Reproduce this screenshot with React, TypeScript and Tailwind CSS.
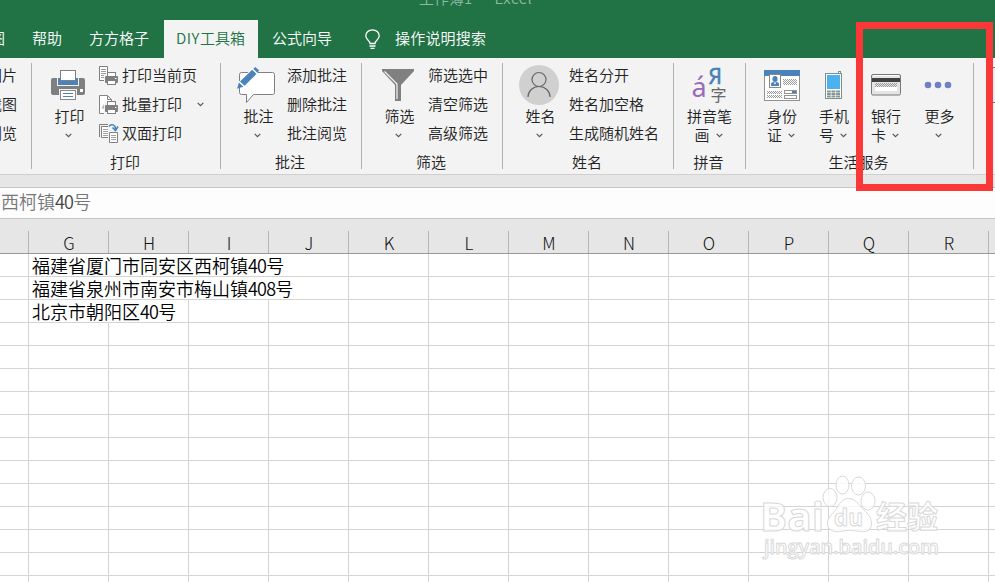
import React from 'react'

type Children = { children: React.ReactNode }

const Caret = () => (
  <svg width="7" height="5" viewBox="0 0 7 5" fill="none" stroke="#555" strokeWidth="1.2" className="shrink-0">
    <path d="M0.7 0.8L3.5 3.6L6.3 0.8" />
  </svg>
)

const PrinterIcon = () => (
  <svg width="34" height="30" viewBox="0 0 34 30">
    <rect x="0" y="8" width="34" height="17" rx="2" fill="#7f7f7f" />
    <rect x="6" y="7" width="22" height="9" fill="#f3f3f3" />
    <rect x="7" y="8" width="20" height="7" fill="#4a82bb" />
    <rect x="9.5" y="0.5" width="15" height="10" fill="#fff" stroke="#7f7f7f" />
    <rect x="29" y="19" width="3" height="3" fill="#fff" />
    <rect x="8" y="19" width="18" height="6" fill="#f3f3f3" />
    <rect x="9.5" y="20.5" width="15" height="9" fill="#fff" stroke="#8a8a8a" />
    <path d="M12 23.5h10M12 26.5h10" stroke="#4a82bb" />
  </svg>
)

const MiniPrinter = () => (
  <g>
    <rect x="5" y="8" width="15" height="12" fill="#f3f3f3" />
    <rect x="6" y="10" width="13" height="7" rx="1" fill="#7f7f7f" />
    <rect x="8.5" y="6.5" width="8" height="4" fill="#fff" stroke="#7f7f7f" />
    <rect x="8.5" y="14.5" width="8" height="4" fill="#fff" stroke="#7f7f7f" />
    <path d="M16 12.5h1.500" stroke="#fff" />
  </g>
)

const PrintPageIcon = () => (
  <svg width="20" height="20" viewBox="0 0 20 20">
    <path d="M0.5 0.5h8v14h-8z" fill="#fff" stroke="#7f7f7f" />
    <path d="M2 3.5h5M2 5.5h5M2 7.5h5M2 9.5h5M2 11.5h5" stroke="#9a9a9a" />
    <MiniPrinter />
  </svg>
)

const PrintBatchIcon = () => (
  <svg width="20" height="20" viewBox="0 0 20 20">
    <path d="M0.5 0.5h8l4 4v14h-12z" fill="#fff" stroke="#858585" />
    <path d="M8.5 0.5v4h4" fill="none" stroke="#858585" />
    <path d="M2.5 13.5L5 9l3 5" fill="#b5b5b5" />
    <MiniPrinter />
  </svg>
)

const DuplexIcon = () => (
  <svg width="20" height="20" viewBox="0 0 20 20">
    <path d="M0.5 13V0.5H9" fill="none" stroke="#7f7f7f" />
    <path d="M2.5 2.5h9v11h-9z" fill="#fff" stroke="#7f7f7f" />
    <path d="M4 5.5h6M4 7.5h6M4 9.5h6M4 11.5h5" stroke="#a0a0a0" />
    <path d="M9 0h11v19H9z" fill="#f3f3f3" />
    <path d="M10.5 8.500h8v10h-8z" fill="#fff" stroke="#7f7f7f" />
    <path d="M12 11.5h5M12 13.5h5M12 15.5h5" stroke="#a0a0a0" />
    <path d="M10 2.500C12 -0.500 16.500 0.500 16.500 5" fill="none" stroke="#3f7fbd" strokeWidth="1.400" />
    <path d="M13.500 3.500L16.500 6.500L19 2.500" fill="none" stroke="#3f7fbd" strokeWidth="1.500" />
  </svg>
)

const CommentIcon = () => (
  <svg width="38" height="37" viewBox="0 0 38 37">
    <path d="M4.500 5.500h31q2 0 2 2v18q0 2-2 2H16.500l-7 8v-8H4.500q-2 0-2-2v-18q0-2 2-2z" fill="#fff" stroke="#7f7f7f" />
    <path d="M4 19L19 4" stroke="#fff" strokeWidth="9" />
    <path d="M3 14.500L15.200 2.800L19.400 7L7.500 18.700z" fill="#4a82bb" />
    <path d="M16.300 1.800L18.300 0L22.200 3.500L20.300 5.700z" fill="#4a82bb" />
    <path d="M2 15.500L6.400 19.700L0 21.800z" fill="#4a82bb" />
  </svg>
)

const FunnelIcon = () => (
  <svg width="32" height="32" viewBox="0 0 32 32">
    <path d="M0 0h32v2L19 16v16h-6V16L0 2z" fill="#808080" />
    <path d="M2.500 2.500L15 15v15" fill="none" stroke="#f3f3f3" strokeWidth="1.200" />
  </svg>
)

const PersonIcon = () => (
  <svg width="40" height="40" viewBox="0 0 40 40">
    <circle cx="20" cy="20" r="20" fill="#d0d0d0" />
    <g fill="none" stroke="#666" strokeWidth="1.200">
      <circle cx="20" cy="14.500" r="7" />
      <path d="M9 32c0-6 5-10.500 11-10.500S31 26 31 32" />
    </g>
  </svg>
)

const PinyinIcon = () => (
  <svg width="34" height="36" viewBox="0 0 34 36" className="overflow-visible font-normal">
    <text x="-1.500" y="30" fontSize="27" fill="#9c6bb8" fontFamily="Noto Sans">á</text>
    <text x="15.500" y="17" fontSize="21" fill="#477fb9" stroke="#477fb9" strokeWidth="0.500" fontFamily="Noto Sans">Я</text>
    <text x="17.500" y="34" fontSize="16" fill="#666" fontFamily="Noto Sans CJK SC">字</text>
  </svg>
)

const IdCardIcon = () => (
  <svg width="36" height="31" viewBox="0 0 36 31">
    <defs>
      <pattern id="dots" width="2" height="2" patternUnits="userSpaceOnUse">
        <path d="M0 0h1v1H0zM1 1h1v1H1z" fill="#999" />
      </pattern>
    </defs>
    <rect x="0.500" y="0.500" width="35" height="30" fill="#fff" stroke="#929292" />
    <rect width="36" height="6" fill="#4a82bb" />
    <rect x="5.500" y="4.500" width="11" height="13" fill="#fff" stroke="#888" />
    <rect x="8.500" y="6" width="5" height="6" rx="2.500" fill="#4a82bb" />
    <path d="M7 16v-2q0-1.500 2-2h4q2 .5 2 2v2z" fill="#4a82bb" />
    <path d="M9.500 12.500l1.500 2l1.500-2z" fill="#fff" />
    <path d="M19 9h14v6H19zM3 21h15v3H3zM3 25h15v3H3z" fill="url(#dots)" />
    <rect x="20.500" y="20.500" width="12" height="3" fill="#fff" stroke="#929292" />
    <rect x="28" y="21" width="4" height="2" fill="#4a82bb" />
    <rect x="20.500" y="25.500" width="12" height="3" fill="#fff" stroke="#929292" />
  </svg>
)

const PhoneIcon = () => (
  <svg width="18" height="28" viewBox="0 0 18 28">
    <rect x="13.500" y="0.500" width="2" height="3" fill="#fff" stroke="#7d9090" />
    <rect x="0.500" y="2.500" width="16" height="25" fill="#fff" stroke="#7d9090" />
    <rect x="2" y="4" width="13" height="14" fill="#4bb1ef" />
    <path d="M2 20.500h13M2 23h13M2 25.500h13" stroke="#86958f" strokeWidth="1.800" />
    <path d="M6.200 19v8M10.700 19v8" stroke="#fff" strokeWidth="0.700" />
  </svg>
)

const BankCardIcon = () => (
  <svg width="30" height="22" viewBox="0 0 30 22">
    <rect x="0.500" y="0.500" width="29" height="20.500" rx="1.500" fill="#e4e4e4" stroke="#777" />
    <path d="M2 1.500h26" stroke="#fff" />
    <rect x="1" y="4" width="28" height="4" fill="#404040" />
    <path d="M4 9h22v4H4z" fill="url(#dots)" />
    <rect x="4" y="13" width="22" height="4" fill="#fff" />
  </svg>
)

const DotsIcon = () => (
  <svg width="28" height="8" viewBox="0 0 28 8" fill="#717fc4">
    <circle cx="4" cy="4" r="3.300" />
    <circle cx="14" cy="4" r="3.300" />
    <circle cx="24" cy="4" r="3.300" />
  </svg>
)

const BulbIcon = () => (
  <svg width="15" height="20" viewBox="0 0 15 20" fill="none" stroke="#fff" strokeWidth="1.300">
    <path d="M5 14.500c0-3-4.200-3.800-4.200-7.800C.8 3.300 3.800.8 7.500.8s6.700 2.500 6.700 5.900c0 4-4.200 4.800-4.200 7.800z" />
    <path d="M4.500 17h6M5.500 19.300h4" />
  </svg>
)

const Group = ({ label, className, children }: Children & { label: string; className: string }) => (
  <div className={`flex h-[106px] shrink-0 flex-col border-r border-[#b1b1b1] ${className}`}>
    <div className="-mt-[2px] flex h-[88px] shrink-0">{children}</div>
    <div className="h-[20px] shrink-0 pr-[2px] text-center leading-[26px] whitespace-nowrap">{label}</div>
  </div>
)

const BigButton = ({ icon, label, second, className }: { icon: React.ReactNode; label: string; second?: string; className: string }) => (
  <div className={`flex shrink-0 flex-col items-center ${className}`}>
    <div className="flex h-[46px] items-center justify-center pt-[2px]">{icon}</div>
    <div className={`h-[18px] leading-[17px] whitespace-nowrap ${second ? '' : 'pl-[3px]'}`}>{label}</div>
    <div className={`flex h-[20px] items-center leading-[18px] ${second ? 'pr-[2px]' : ''}`}>
      {second && <span className="mr-[6px]">{second}</span>}
      <Caret />
    </div>
  </div>
)

const SmallItems = ({ items, className }: { items: React.ReactNode[]; className: string }) => (
  <div className={`flex flex-col ${className}`}>
    {items.map((item, i) => (
      <div key={i} className="flex h-[29px] shrink-0 items-center whitespace-nowrap">{item}</div>
    ))}
  </div>
)

const IconItem = ({ icon, children }: Children & { icon: React.ReactNode }) => (
  <>
    <span className="mr-[3px]">{icon}</span>
    {children}
  </>
)

const TitleBar = () => (
  <div className="h-[58px] bg-[#217346] text-[15px] text-white">
    <div className="flex h-[20px] overflow-hidden pl-[419px] text-[#90b9a2]">
      <span className="-mt-[14px] h-[24px] leading-[24px] whitespace-pre">工作簿1</span>
      <span className="-mt-[14px] ml-[8px] h-[24px] leading-[24px]">-</span>
      <span className="-mt-[14px] ml-[9px] h-[24px] leading-[24px] tracking-[0.6px]">Excel</span>
    </div>
    <div className="flex h-[38px] leading-[35px] whitespace-nowrap">
      <div className="flex w-[19px] shrink-0 overflow-hidden">
        <span className="-ml-[10px]">图</span>
      </div>
      <div className="w-[57px] shrink-0 pl-[13px]">帮助</div>
      <div className="w-[88px] shrink-0 pl-[13px]">方方格子</div>
      <div className="w-[94px] shrink-0 bg-[#f3f3f3] pl-[12px] text-[#217346]">
        <span className="tracking-[0.5px]">DIY</span>工具箱
      </div>
      <div className="w-[107px] shrink-0 pl-[14px]">公式向导</div>
      <div className="flex w-[30px] shrink-0 items-center">
        <BulbIcon />
      </div>
      <div className="leading-[36px] tracking-[0.2px]">操作说明搜索</div>
    </div>
  </div>
)

const Ribbon = () => (
  <div className="flex h-[117px] overflow-hidden border-b border-[#d0d0d0] bg-[#f3f3f3] pt-[5px] text-[15px] text-[#222]">
    <Group label="" className="w-[32px]">
      <div className="flex w-[17px] justify-end overflow-hidden">
        <SmallItems className="shrink-0" items={['图片', '截图', '浏览']} />
      </div>
    </Group>
    <Group label="打印" className="w-[189px]">
      <BigButton icon={<PrinterIcon />} label="打印" className="ml-[12px] w-[48px]" />
      <SmallItems
        className="ml-[7px]"
        items={[
          <IconItem icon={<PrintPageIcon />}>打印当前页</IconItem>,
          <IconItem icon={<PrintBatchIcon />}>
            批量打印
            <span className="ml-[15px]"><Caret /></span>
          </IconItem>,
          <IconItem icon={<DuplexIcon />}>双面打印</IconItem>,
        ]}
      />
    </Group>
    <Group label="批注" className="w-[141px]">
      <BigButton icon={<div className="-ml-[3px]"><CommentIcon /></div>} label="批注" className="ml-[12px] w-[48px]" />
      <SmallItems className="ml-[6px]" items={['添加批注', '删除批注', '批注阅览']} />
    </Group>
    <Group label="筛选" className="w-[141px]">
      <BigButton icon={<FunnelIcon />} label="筛选" className="ml-[12px] w-[48px]" />
      <SmallItems className="ml-[6px]" items={['筛选选中', '清空筛选', '高级筛选']} />
    </Group>
    <Group label="姓名" className="w-[171px]">
      <BigButton icon={<PersonIcon />} label="姓名" className="ml-[12px] w-[48px]" />
      <SmallItems className="ml-[6px]" items={['姓名分开', '姓名加空格', '生成随机姓名']} />
    </Group>
    <Group label="拼音" className="w-[72px]">
      <BigButton icon={<PinyinIcon />} label="拼音笔" second="画" className="w-[71px]" />
    </Group>
    <Group label="生活服务" className="w-[228px]">
      <BigButton icon={<IdCardIcon />} label="身份" second="证" className="ml-[10px] w-[52px]" />
      <BigButton icon={<PhoneIcon />} label="手机" second="号" className="w-[52px]" />
      <BigButton icon={<BankCardIcon />} label="银行" second="卡" className="w-[52px]" />
      <BigButton icon={<DotsIcon />} label="更多" className="w-[52px]" />
    </Group>
    <div className="mt-[4px] ml-[19px] h-[36px] w-[2px] border-y border-[#777] bg-[#e5edf7]" />
  </div>
)

const columns = ['G', 'H', 'I', 'J', 'K', 'L', 'M', 'N', 'O', 'P', 'Q', 'R']

// span = number of columns the text spills over
const rows = [
  { before: '福建省厦门市同安区西柯镇', digits: '40', span: 4 },
  { before: '福建省泉州市南安市梅山镇', digits: '408', span: 4 },
  { before: '北京市朝阳区', digits: '40', span: 2 },
  ...Array.from({ length: 12 }, () => ({ before: '', digits: '', span: 1 })),
]

const spanWidth: Record<number, string> = { 1: 'w-[80px]', 2: 'w-[160px]', 4: 'w-[320px]' }

const Sheet = () => (
  <div>
    <div className="flex h-[35px] items-end border-b border-[#999] bg-[#e6e6e6] text-[17px] font-light text-[#111]">
      <div className="h-[22px] w-[29px] shrink-0 border-r border-[#b5b5b5]" />
      {columns.map((c) => (
        <div key={c} className="h-[22px] w-[80px] shrink-0 border-r border-[#b5b5b5] pl-px text-center leading-[23px]">{c}</div>
      ))}
    </div>
    {rows.map((row, i) => (
      <div key={i} className="flex h-[23px] border-b border-[#d4d4d4] text-[18px] leading-[22px] text-black">
        <div className="w-[29px] shrink-0 border-r border-[#d4d4d4]" />
        <div className={`shrink-0 border-r border-[#d4d4d4] pl-[3px] whitespace-nowrap ${spanWidth[row.span]}`}>
          {row.before && (
            <>
              {row.before}
              <span className="tracking-[-0.8px]">{row.digits}</span>号
            </>
          )}
        </div>
        {columns.slice(row.span).map((c) => (
          <div key={c} className="w-[80px] shrink-0 border-r border-[#d4d4d4]" />
        ))}
      </div>
    ))}
  </div>
)

const Watermark = () => (
  <svg
    className="absolute top-[470px] left-[755px]"
    width="195"
    height="95"
    viewBox="0 0 195 95"
    fill="#fff"
    fillOpacity="0.8"
    stroke="#d9d9d9"
    strokeWidth="1"
    strokeLinejoin="round"
  >
    <text x="5" y="60.500" fontSize="39" fontWeight="bold" fontFamily="Open Sans" textLength="64" lengthAdjust="spacingAndGlyphs">Bai</text>
    <ellipse cx="75" cy="27.500" rx="7" ry="9" />
    <ellipse cx="87.500" cy="15" rx="6.500" ry="9" />
    <ellipse cx="103.500" cy="16" rx="7" ry="9" />
    <ellipse cx="113" cy="31" rx="7" ry="9" />
    <path d="M93.500 28.500c7 0 10 6 14 10s9 8 9 15-5 8.500-10 8-8-1-13-1-9 1.500-13 1c-6-.5-9-5-8-10s6-8 9-13 6-10 12-10z" />
    <text x="79" y="56" fontSize="23" fontWeight="bold" fontFamily="Open Sans" textLength="29" lengthAdjust="spacingAndGlyphs">du</text>
    <text x="121" y="58" fontSize="31" fontWeight="bold" fontFamily="Noto Sans CJK SC" textLength="62">经验</text>
    <text x="9" y="84" fontSize="20" fontWeight="600" fontFamily="Open Sans" textLength="175" lengthAdjust="spacingAndGlyphs">jingyan.baidu.com</text>
  </svg>
)

const App = () => {
  return (
    <div className="relative h-[582px] w-[995px] overflow-hidden bg-white font-['Noto_Sans_CJK_SC',sans-serif] font-[350]">
      <TitleBar />
      <Ribbon />
      <div className="h-[13px] border-b border-[#c6c6c6] bg-[#e6e6e6]" />
      <div className="h-[31px] border-b border-[#c6c6c6] bg-[#fdfdfd] pl-[1px] text-[18px] leading-[27px] text-[#777]">
        西柯镇<span className="tracking-[-0.8px] text-[#444]">40</span>号
      </div>
      <Sheet />
      <Watermark />
      <div className="absolute top-[22px] left-[856px] h-[169px] w-[137px] border-[7px] border-[#fb3838]" />
    </div>
  )
}

export default App
